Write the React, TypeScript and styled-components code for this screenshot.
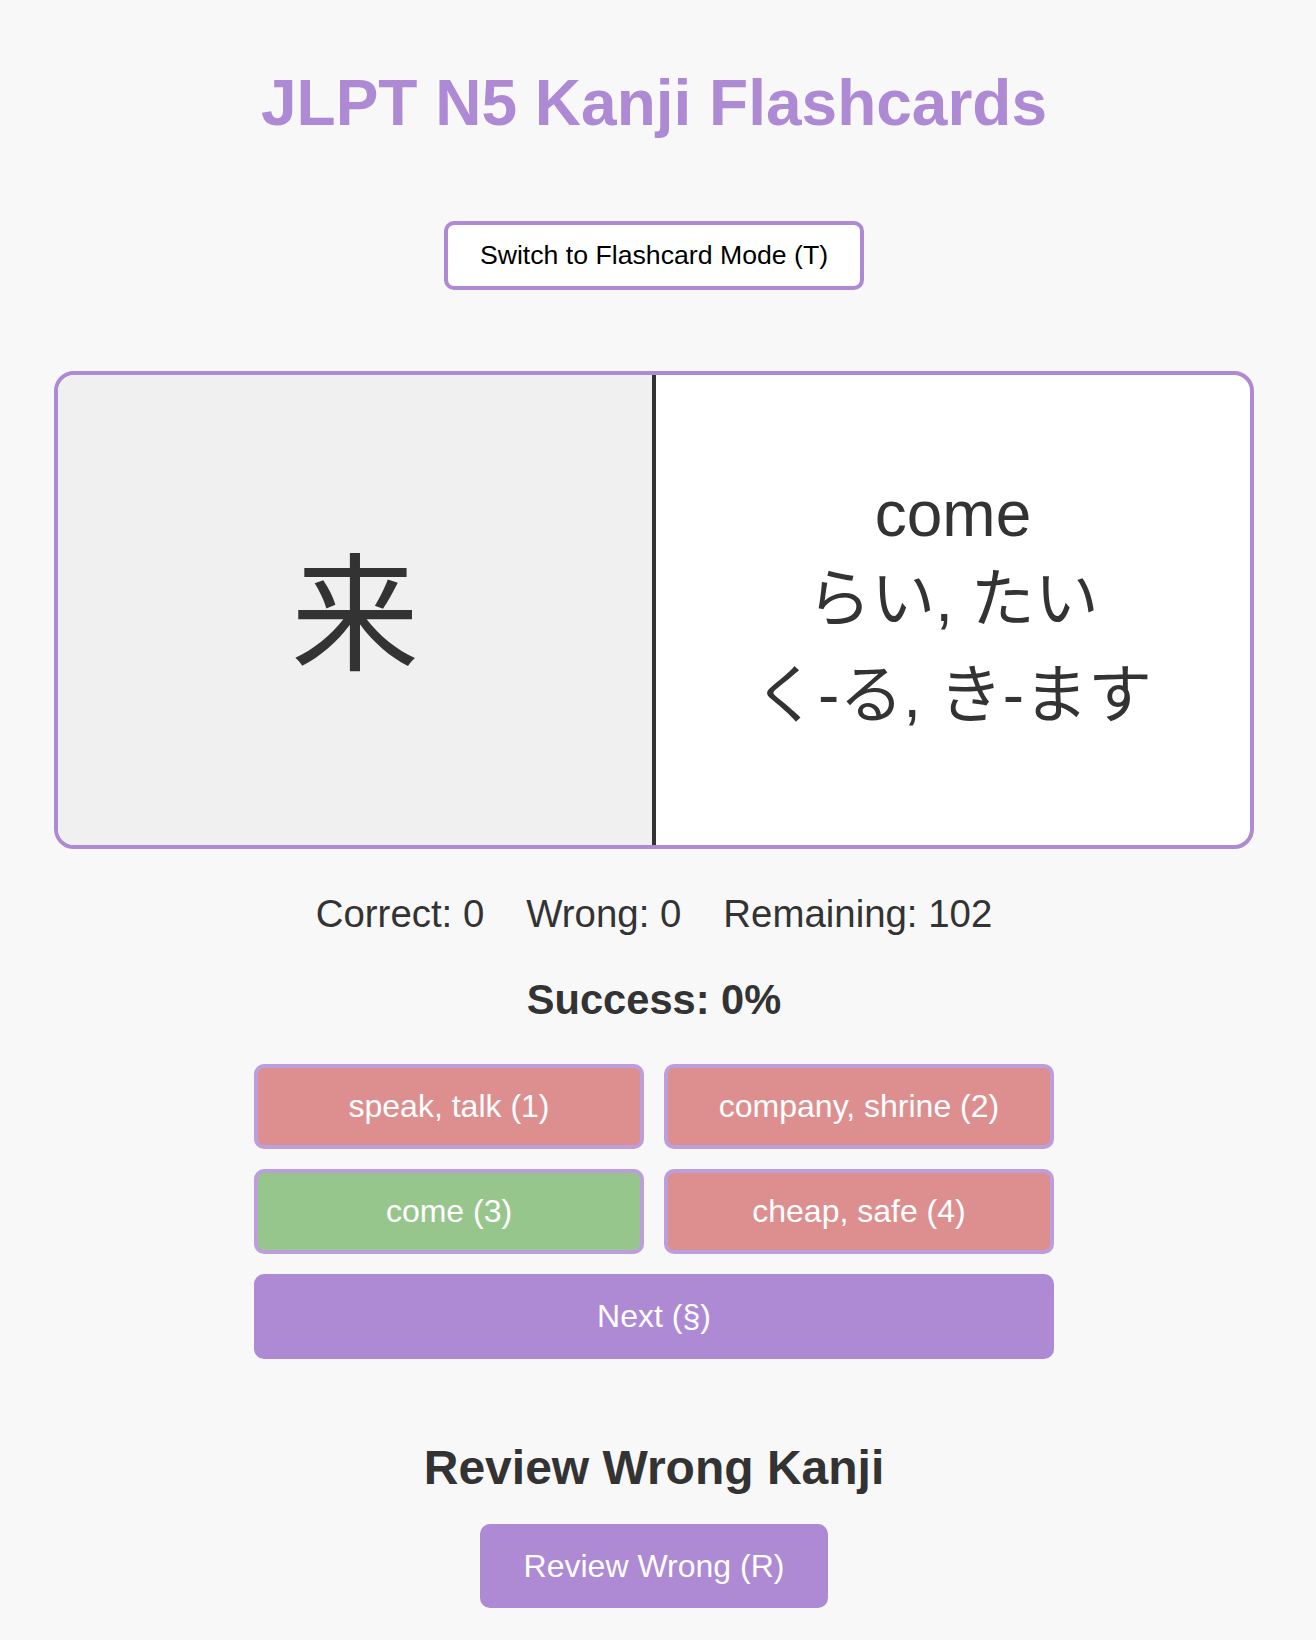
import React, { useState } from "react"
import styled, { createGlobalStyle } from "styled-components"

const purple = "#ae89d4"

const GlobalStyle = createGlobalStyle`
  body {
    margin: 0;
    background: #f8f8f8;
    color: #333;
    font-family: "Liberation Sans", Arial, "Noto Sans CJK JP", sans-serif;
  }
`

const Page = styled.div`
  width: 1308px;
  padding: 66px 0 32px;
  display: flex;
  flex-direction: column;
  align-items: center;
`

const Title = styled.h1`
  margin: 0;
  font-size: 64px;
  line-height: 74px;
  font-weight: 700;
  color: ${purple};
`

const ModeButton = styled.button`
  margin-top: 81px;
  padding: 15px 32px;
  font-family: "Liberation Sans", Arial, sans-serif;
  font-size: 26.67px;
  line-height: 31px;
  color: #000;
  background: #fff;
  border: 4px solid ${purple};
  border-radius: 10px;
  cursor: pointer;
`

const Card = styled.div`
  margin-top: 81px;
  width: 1200px;
  height: 478px;
  box-sizing: border-box;
  display: flex;
  background: #fff;
  border: 4px solid ${purple};
  border-radius: 20px;
  overflow: hidden;
`

const KanjiSide = styled.div`
  flex: 1;
  display: flex;
  align-items: center;
  justify-content: center;
  padding-bottom: 8px;
  background: #f0f0f0;
  border-right: 4px solid #333;
  font-family: "Noto Sans CJK JP", sans-serif;
  font-size: 128px;
  line-height: 1;
  color: #333;
`

const MeaningSide = styled.div`
  flex: 1;
  display: flex;
  flex-direction: column;
  align-items: center;
  justify-content: center;
  font-size: 64px;
  color: #333;
`

const MeaningLine = styled.div<{ $kana?: boolean }>`
  white-space: nowrap;
  line-height: ${(p) => (p.$kana ? "96px" : "74px")};
`

const Stats = styled.div`
  margin-top: 43px;
  display: flex;
  gap: 42px;
  font-size: 38.4px;
  line-height: 44px;
  color: #333;
`

const Success = styled.div`
  margin-top: 40px;
  font-size: 41.6px;
  line-height: 48px;
  font-weight: 700;
  color: #333;
`

const Options = styled.div`
  margin-top: 40px;
  width: 800px;
  display: grid;
  grid-template-columns: 1fr 1fr;
  gap: 20px;
`

const OptionButton = styled.button<{ $correct: boolean }>`
  height: 85px;
  padding: 0 12px;
  font-family: "Liberation Sans", Arial, sans-serif;
  font-size: 32px;
  color: #fff;
  background: ${(p) => (p.$correct ? "#97c68d" : "#dd8f8f")};
  border: 4px solid #bb9edb;
  border-radius: 10px;
  cursor: pointer;
`

const NextButton = styled.button`
  grid-column: 1 / -1;
  height: 85px;
  font-family: "Liberation Sans", Arial, sans-serif;
  font-size: 32px;
  color: #fff;
  background: ${purple};
  border: none;
  border-radius: 10px;
  cursor: pointer;
`

const ReviewTitle = styled.h2`
  margin: 81px 0 0;
  font-size: 48px;
  line-height: 55px;
  font-weight: 700;
  color: #333;
`

const ReviewButton = styled.button`
  margin-top: 29px;
  padding: 23px 44px;
  font-family: "Liberation Sans", Arial, sans-serif;
  font-size: 32px;
  line-height: 38px;
  color: #fff;
  background: ${purple};
  border: none;
  border-radius: 10px;
  cursor: pointer;
`

const choices = [
  { label: "speak, talk", correct: false },
  { label: "company, shrine", correct: false },
  { label: "come", correct: true },
  { label: "cheap, safe", correct: false },
]

export default function App() {
  const [quizMode, setQuizMode] = useState(true)

  return (
    <Page>
      <GlobalStyle />
      <Title>JLPT N5 Kanji Flashcards</Title>
      <ModeButton onClick={() => setQuizMode(!quizMode)}>
        Switch to {quizMode ? "Flashcard" : "Quiz"} Mode (T)
      </ModeButton>

      <Card>
        <KanjiSide>来</KanjiSide>
        <MeaningSide>
          <MeaningLine>come</MeaningLine>
          <MeaningLine $kana>らい, たい</MeaningLine>
          <MeaningLine $kana>く-る, き-ます</MeaningLine>
        </MeaningSide>
      </Card>

      <Stats>
        <span>Correct: 0</span>
        <span>Wrong: 0</span>
        <span>Remaining: 102</span>
      </Stats>
      <Success>Success: 0%</Success>

      <Options>
        {choices.map((c, i) => (
          <OptionButton key={c.label} $correct={c.correct}>
            {c.label} ({i + 1})
          </OptionButton>
        ))}
        <NextButton>Next (§)</NextButton>
      </Options>

      <ReviewTitle>Review Wrong Kanji</ReviewTitle>
      <ReviewButton>Review Wrong (R)</ReviewButton>
    </Page>
  )
}
